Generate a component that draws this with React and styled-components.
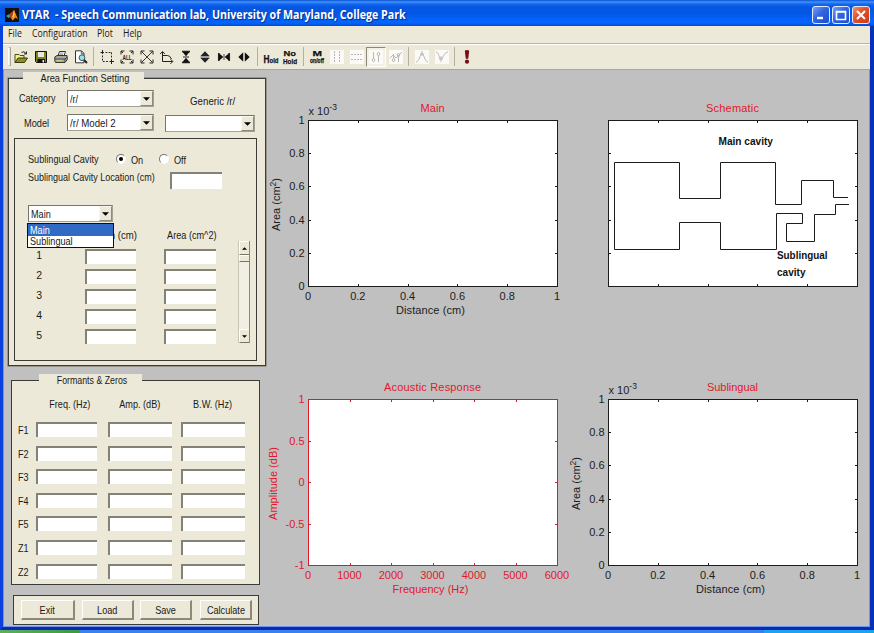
import React from "react";
import styled, { createGlobalStyle, css } from "styled-components";

const Global = createGlobalStyle`
  * { box-sizing: border-box; }
  html, body { margin: 0; padding: 0; overflow: hidden; background: #0a3fd0; }
  body { font-family: "Liberation Sans", Arial, sans-serif; color: #1a1a18; }
`;

const face = "#ece9d8";

const Screen = styled.div`
  width: 874px;
  height: 633px;
  display: flex;
  flex-direction: column;
`;

const TitleBar = styled.header`
  height: 26px;
  display: flex;
  align-items: center;
  padding: 3px 4px 0 5px;
  background: linear-gradient(
    to bottom,
    #0b52d4 0, #3f93fb 2px, #1568ee 4px, #0556e2 7px,
    #0457e6 14px, #0362fb 20px, #0365fd 23px, #0249d0 26px
  );
`;

const TitleText = styled.h1`
  margin: 0 0 0 3px;
  flex: 1;
  white-space: pre;
  color: #fff;
  font: bold 11.5px "Open Sans", sans-serif;
  text-shadow: 1px 1px 1px #0a2a88;
  transform: scaleX(${(p) => p.$sx});
  transform-origin: left center;
`;

const CaptionButtons = styled.div`
  display: flex;
  gap: 2px;
`;

const CaptionButton = styled.button`
  width: 18px;
  height: 18px;
  padding: 0;
  display: grid;
  place-items: center;
  border: 1px solid #e4ecfd;
  border-radius: 3px;
  background: ${(p) =>
    p.$close
      ? "linear-gradient(135deg, #f0906c, #e0502a 45%, #c83c14)"
      : "linear-gradient(135deg, #7aa0f4, #3065e0 45%, #1c4cd0)"};
`;

const Frame = styled.div`
  flex: 1;
  display: flex;
  flex-direction: column;
  border: solid #0a3fe0;
  border-width: 0 4px 3px 3px;
  border-right-color: #0830b8;
  border-bottom-color: #0a2ab0;
`;

const MenuBar = styled.nav`
  height: 18px;
  padding: 0 0 3px 5px;
  display: flex;
  align-items: center;
  background: ${face};
  border-bottom: 1px solid #b8b5a6;
  font: 10.5px "Open Sans", sans-serif;
`;

const MenuItem = styled.span`
  width: ${(p) => p.$w}px;
  flex: none;
  transform: scaleX(${(p) => p.$sx || 0.83});
  transform-origin: left center;
  white-space: nowrap;
`;

const ToolBar = styled.div`
  height: 26px;
  display: flex;
  align-items: center;
  padding: 0 0 1px 5px;
  background: ${face};
  border-top: 1px solid #fff;
  border-bottom: 1px solid #a9a698;
`;

const Grip = styled.i`
  width: 3px;
  height: 19px;
  border: 1px solid #c4c1b0;
  border-left-color: #fff;
  border-right-color: #aaa798;
`;

const Tool = styled.span`
  width: ${(p) => p.$w || 20}px;
  height: 20px;
  display: grid;
  place-items: center;
  flex: none;
  ${(p) =>
    p.$pressed &&
    css`
      border: 1px solid #fff;
      border-top-color: #8c897a;
      border-left-color: #8c897a;
      background: #f3f1e6;
    `}
  svg { display: block; overflow: visible; }
`;

const ToolSep = styled.i`
  width: ${(p) => p.$w}px;
  height: 19px;
  display: flex;
  justify-content: center;
  &::before {
    content: "";
    width: 1px;
    background: #b3b0a1;
  }
`;

const Client = styled.main`
  flex: 1;
  display: flex;
  background: #c0c0c0;
  border: solid #6f95f2;
  border-width: 0 1px 1px 1px;
`;

const Controls = styled.aside`
  width: 262px;
  flex: none;
  padding: 8px 0 0 4px;
`;

const Panel = styled.section`
  width: ${(p) => p.$w}px;
  height: ${(p) => p.$h}px;
  margin: ${(p) => p.$m || "0"};
  padding: ${(p) => p.$p || "0"};
  background: ${face};
  border: 1px solid #3c3b35;
  ${(p) => p.$double && "box-shadow: 0 0 0 0.5px #6d6b60;"}
`;

const PanelTab = styled.div`
  width: ${(p) => p.$w}px;
  height: 12px;
  margin: -7px 0 0 ${(p) => p.$x}px;
  padding-left: ${(p) => p.$pad || 0}px;
  background: ${face};
  display: flex;
  align-items: center;
  justify-content: center;
`;

const Row = styled.div`
  display: flex;
  align-items: flex-start;
  height: ${(p) => p.$h}px;
  padding-left: ${(p) => p.$x || 0}px;
`;

const Label = styled.label`
  width: ${(p) => p.$w}px;
  flex: none;
  margin-left: ${(p) => p.$x || 0}px;
  padding-top: ${(p) => p.$t || 0}px;
  display: flex;
  justify-content: ${(p) => (p.$center ? "center" : "flex-start")};
`;

const Narrow = styled.span`
  flex: none;
  display: block;
  font-size: 11px;
  line-height: 12px;
  white-space: nowrap;
  transform: scaleX(${(p) => p.$sx || 0.83});
  transform-origin: ${(p) => (p.$left ? "left" : "center")} center;
`;

const Combo = styled.div`
  width: ${(p) => p.$w}px;
  height: 17px;
  flex: none;
  margin-left: ${(p) => p.$x || 0}px;
  margin-top: ${(p) => p.$t || 0}px;
  display: flex;
  align-items: center;
  padding-left: 2px;
  background: #fff;
  border: 1px solid #77756a;
  border-right-color: #a5a294;
  border-bottom-color: #a5a294;
`;

const ComboArrow = styled.span`
  width: 13px;
  height: 15px;
  margin-left: auto;
  display: grid;
  place-items: center;
  background: ${face};
  border: 1px solid #f8f7f0;
  border-right-color: #8c897a;
  border-bottom-color: #8c897a;
`;

const Field = styled.div`
  width: ${(p) => p.$w}px;
  height: ${(p) => p.$h || 15}px;
  flex: none;
  margin-left: ${(p) => p.$x || 0}px;
  margin-top: ${(p) => p.$t || 0}px;
  background: #fff;
  border-top: 2px solid #848276;
  border-left: 2px solid #848276;
`;

const Radio = styled.span`
  width: 10px;
  height: 10px;
  flex: none;
  margin-top: 1px;
  display: grid;
  place-items: center;
  border-radius: 50%;
  background: #fff;
  border: 1px solid #fbfaf4;
  border-top-color: #77756a;
  border-left-color: #77756a;
  &::before {
    content: "";
    width: 4px;
    height: 4px;
    border-radius: 50%;
    background: ${(p) => (p.$on ? "#000" : "transparent")};
  }
`;

const ComboHost = styled.div`
  position: relative;
  width: 85px;
`;

const DropList = styled.div`
  position: absolute;
  z-index: 2;
  left: -1px;
  top: 18px;
  width: 87px;
  height: 25px;
  border: 1px solid #111;
  background: #fff;
`;

const Option = styled.div`
  height: 11.5px;
  padding-left: 2px;
  display: flex;
  align-items: center;
  ${(p) => p.$on && "background: #316ac5; color: #fff;"}
`;

const TableArea = styled.div`
  display: flex;
`;

const ScrollBar = styled.div`
  width: 12px;
  height: 102px;
  margin: 19px 0 0 22px;
  display: flex;
  flex-direction: column;
  border-left: 1px solid #c9c6b6;
  border-right: 1px solid #8b887a;
  background: #f1efe4;
`;

const ScrollPart = styled.span`
  height: ${(p) => p.$h}px;
  margin-top: ${(p) => (p.$end ? "auto" : 0)};
  display: grid;
  place-items: center;
  background: ${face};
  border: 1px solid #fff;
  border-right: 0;
  border-bottom-color: #77756a;
`;

const PushButton = styled.button`
  width: ${(p) => p.$w}px;
  height: 20px;
  margin-left: ${(p) => p.$x}px;
  padding: 0;
  display: flex;
  align-items: center;
  justify-content: center;
  flex: none;
  background: ${face};
  color: inherit;
  font-family: inherit;
  border: 1px solid #fff;
  border-right: 2px solid #8c897a;
  border-bottom: 2px solid #8c897a;
`;

const Plots = styled.div`
  display: grid;
  grid-template-columns: 300px 300px;
  grid-template-rows: 279px 277px;
  svg { display: block; overflow: visible; }
`;

const TaskBar = styled.footer`
  height: 3px;
  display: flex;
  background: #3a80ee;
`;
const StartEdge = styled.div`
  width: 80px;
  background: linear-gradient(to right, #5fae5c, #3c9a3c);
`;
const TrayEdge = styled.div`
  width: 110px;
  margin-left: auto;
  background: #1ba3ee;
`;

const T = ({ children, ...rest }) => <Narrow {...rest}>{children}</Narrow>;

const Arrow = ({ up, s = 7 }) => (
  <svg width={s} height={s / 2 + 0.5} viewBox="0 0 8 4">
    <path d={up ? "M0 4L4 0L8 4Z" : "M0 0H8L4 4Z"} fill="#000" />
  </svg>
);

function Select({ text, sx, ...rest }) {
  return (
    <Combo {...rest}>
      <T $left $sx={sx}>{text}</T>
      <ComboArrow><Arrow /></ComboArrow>
    </Combo>
  );
}

const MatlabLogo = () => (
  <svg width="14" height="14" viewBox="0 0 14 14">
    <rect width="14" height="14" fill="#15100f" />
    <path d="M1 8L4 6.2L6 8L4 10Z" fill="#35a9b8" />
    <path d="M4 6.2L7 4L9 1.6L8 8L6 10L4.5 9Z" fill="#b3401c" />
    <path d="M9 1.6L10.3 5L13 11.3L10.5 9.6L7.6 12.5L6 10L8 7Z" fill="#f28a1d" />
    <path d="M9 2.2L9.6 6L8.2 9.5L7.4 9Z" fill="#fbd750" />
  </svg>
);

const Ico = ({ children, w = 14, h = 14 }) => (
  <svg width={w} height={h} viewBox={`0 0 ${w} ${h}`} fill="none" stroke="#222">
    {children}
  </svg>
);

const OpenIcon = () => (
  <Ico>
    <path d="M1 12.5V4.5H5L6 5.5H10V8" fill="#f3ef9a" stroke="#4a4a14" />
    <path d="M1 12.5L4 8H13.5L10.5 12.5Z" fill="#8f8f1c" stroke="#3a3a10" />
    <path d="M7.5 2.5Q10 0.5 12 3.5M12.5 1.5V4H10" stroke="#222" />
  </Ico>
);
const SaveIcon = () => (
  <Ico>
    <path d="M1.5 1.5H12.5V12.5H2.5L1.5 11.5Z" fill="#83831c" stroke="#111" />
    <rect x="4" y="2" width="6" height="5" fill="#e8e8e0" stroke="none" />
    <rect x="3.5" y="9" width="7.5" height="4" fill="#111" stroke="none" />
    <rect x="8.5" y="10" width="1.6" height="2.4" fill="#eee" stroke="none" />
  </Ico>
);
const PrintIcon = () => (
  <Ico>
    <path d="M4 6L5.5 1.5H11.5L10 6" fill="#fff" stroke="#333" />
    <path d="M0.8 7L3 5.5H13L13.3 9.5L11 12.5H1.5L0.8 11Z" fill="#a8a8a2" stroke="#333" />
    <path d="M1 9H11L13 7M11 9V12" stroke="#444" />
    <path d="M3 10.7H8" stroke="#dede40" />
    <path d="M6 3H9.6M5.5 4.5H9" stroke="#777" strokeWidth="0.7" />
  </Ico>
);
const PreviewIcon = () => (
  <Ico>
    <path d="M1.5 0.8H7.5L10 3.5V12.8H1.5Z" fill="#fff" stroke="#333" />
    <path d="M7.3 1V3.8H10" stroke="#333" strokeWidth="0.8" />
    <circle cx="8" cy="7.7" r="2.9" fill="#9fdce4" stroke="#3d5b60" />
    <path d="M10 10L13 13" stroke="#222" strokeWidth="2" />
  </Ico>
);
const CropIcon = () => (
  <Ico>
    <path d="M2.5 0V4M0.5 2.5H4M11.5 9V14M9.5 11.5H14" />
    <path d="M5.5 2.5H12M2.5 5.5V11.5H9M11.5 2.5V8" strokeDasharray="1.8 1.4" />
  </Ico>
);
const ArrowCorners = () => (
  <path d="M1 4.5V1H4.5M9.5 1H13V4.5M13 9.5V13H9.5M4.5 13H1V9.5" />
);
const AllIcon = () => (
  <Ico>
    <ArrowCorners />
    <path d="M1 1L3 3M13 1L11 3M1 13L3 11M13 13L11 11" />
    <text x="2.4" y="10" fontSize="7.5" fontWeight="bold" fill="#222" stroke="none" textLength="9.4" lengthAdjust="spacingAndGlyphs">ALL</text>
  </Ico>
);
const ExpandIcon = () => (
  <Ico>
    <ArrowCorners />
    <path d="M1.5 1.5L12.5 12.5M12.5 1.5L1.5 12.5" strokeWidth="0.9" />
  </Ico>
);
const AxesIcon = () => (
  <Ico>
    <path d="M3.5 2V11.5H13.5M1.2 4L3.5 1.5L5.8 4M11.5 9.2L13.8 11.5L11.5 13.8" />
    <path d="M4 5.5H8.5Q11 5.5 12.5 9" />
  </Ico>
);
const VInIcon = () => (
  <Ico>
    <path d="M3 1.5H11M3 12.5H11" strokeWidth="1.6" />
    <path d="M3.5 2L7 6.2L10.5 2ZM3.5 12L7 7.8L10.5 12Z" fill="#111" stroke="none" />
    <path d="M4 7H10" />
  </Ico>
);
const VOutIcon = () => (
  <Ico>
    <path d="M2.5 6L7 1.2L11.5 6ZM2.5 8L7 12.8L11.5 8Z" fill="#222" stroke="none" />
    <path d="M2.5 7H11.5" stroke="#555" />
  </Ico>
);
const HInIcon = () => (
  <Ico>
    <path d="M1.7 3V11M12.3 3V11" strokeWidth="1.5" />
    <path d="M2 3.3L6.3 7L2 10.7ZM12 3.3L7.7 7L12 10.7Z" fill="#111" stroke="none" />
    <path d="M7 4V10" strokeWidth="0.8" />
  </Ico>
);
const HOutIcon = () => (
  <Ico>
    <path d="M6 2.5L1.3 7L6 11.5ZM8 2.5L12.7 7L8 11.5Z" fill="#111" stroke="none" />
    <path d="M7 2.5V11.5" stroke="#777" strokeWidth="0.8" />
  </Ico>
);

/* Toolbar buttons whose face is a word; each line is [text, x, baseline, size, width]. */
const GlyphText = ({ lines }) => (
  <Ico w={16} h={16}>
    {lines.map(([s, x, y, size, len]) => (
      <text key={y} x={x} y={y} fontSize={size} fontWeight="bold" fill="#111" stroke="#111" strokeWidth="0.25" textLength={len} lengthAdjust="spacingAndGlyphs">{s}</text>
    ))}
  </Ico>
);
const holdWord = <>H<tspan fontSize="8">old</tspan></>;

const Pale = ({ d, dash }) => (
  <Ico>
    <rect x="0" y="0" width="14" height="14" fill="#fbfaf6" stroke="none" />
    <path d={d} stroke="#b9b7b4" strokeDasharray={dash} />
  </Ico>
);
const BangIcon = () => (
  <Ico>
    <path d="M4.8 0.8Q7 -0.6 9.2 0.8L8.2 8.8H5.8Z" fill="#7c0c14" stroke="none" />
    <circle cx="7" cy="11.7" r="2.1" fill="#7c0c14" stroke="none" />
  </Ico>
);

const PLOT = { x: 42.5, y: 50.5, w: 249, h: 166 };

function Chart({ title, titleW, color = "#1c1c1c", xs, ys, xLabel, xLabelW, yLabel, exponent, xDiv, yDiv, children }) {
  const { x, y, w, h } = PLOT;
  const r = (v) => Math.floor(v) + 0.5;
  const ticks = [];
  for (let i = 1; i < xDiv; i++) {
    const px = r(x + (w * i) / xDiv);
    ticks.push(`M${px} ${y}v2.5M${px} ${y + h}v-2.5`);
  }
  for (let i = 1; i < yDiv; i++) {
    const py = r(y + (h * i) / yDiv);
    ticks.push(`M${x} ${py}h2.5M${x + w} ${py}h-2.5`);
  }
  return (
    <svg width="300" height="277" viewBox="0 0 300 277" fontSize="11" fill={color}>
      <rect x={x} y={y} width={w} height={h} fill="#fff" stroke={color} />
      <path d={ticks.join("")} stroke={color} fill="none" />
      <text x={x + w / 2 - 0.5} y={y - 9} textAnchor="middle" fill="#e0182c" textLength={titleW}>{title}</text>
      {exponent && (
        <text x={x} y={y - 5.5}>x 10<tspan fontSize="8.5" dy="-5.5">-3</tspan></text>
      )}
      {xs && xs.map((s, i) => (
        <text key={s} x={x + (w * i) / xDiv - 0.5} y={y + h + 13} textAnchor="middle">{s}</text>
      ))}
      {ys && ys.map((s, i) => (
        <text key={s} x={x - 4} y={y + (h * i) / yDiv + 3.5} textAnchor="end">{s}</text>
      ))}
      {xLabel && <text x={x + w / 2 - 2.5} y={y + h + 27.5} textAnchor="middle" textLength={xLabelW}>{xLabel}</text>}
      {yLabel && (
        <text transform={`translate(${exponent ? 14 : 11} ${y + h / 2 + 1}) rotate(-90)`} textAnchor="middle">{yLabel}</text>
      )}
      {children}
    </svg>
  );
}

const unit = ["0", "0.2", "0.4", "0.6", "0.8", "1"];
const unitDown = [...unit].reverse();
const areaLabel = <>Area (cm<tspan fontSize="8.5" dy="-4">2</tspan><tspan dy="4">)</tspan></>;

const areaRows = ["1", "2", "3", "4", "5"];
const formants = ["F1", "F2", "F3", "F4", "F5", "Z1", "Z2"];

export default function App() {
  return (
    <Screen>
      <Global />
      <TitleBar>
        <MatlabLogo />
        <TitleText $sx={0.928}>{"VTAR  - Speech Communication lab, University of Maryland, College Park"}</TitleText>
        <CaptionButtons>
          <CaptionButton>
            <svg width="12" height="12"><path d="M2 9H8" stroke="#fff" strokeWidth="2.4" /></svg>
          </CaptionButton>
          <CaptionButton>
            <svg width="12" height="12"><path d="M1.5 2.5H10.5V10.5H1.5ZM1.5 3H10.5" stroke="#fff" strokeWidth="1.6" fill="none" /></svg>
          </CaptionButton>
          <CaptionButton $close>
            <svg width="12" height="12"><path d="M2 2L10 10M10 2L2 10" stroke="#fff" strokeWidth="2" /></svg>
          </CaptionButton>
        </CaptionButtons>
      </TitleBar>

      <Frame>
        <MenuBar>
          <MenuItem $w={24}>File</MenuItem>
          <MenuItem $w={65}>Configuration</MenuItem>
          <MenuItem $w={26}>Plot</MenuItem>
          <MenuItem $w={30}>Help</MenuItem>
        </MenuBar>
        <ToolBar>
          <Grip />
          <Tool><OpenIcon /></Tool>
          <Tool><SaveIcon /></Tool>
          <Tool><PrintIcon /></Tool>
          <Tool $w={19}><PreviewIcon /></Tool>
          <ToolSep $w={7} />
          <Tool><CropIcon /></Tool>
          <Tool><AllIcon /></Tool>
          <Tool $w={19}><ExpandIcon /></Tool>
          <Tool><AxesIcon /></Tool>
          <Tool $w={19}><VInIcon /></Tool>
          <Tool $w={19}><VOutIcon /></Tool>
          <Tool><HInIcon /></Tool>
          <Tool><HOutIcon /></Tool>
          <ToolSep $w={7} />
          <Tool $w={19}><GlyphText lines={[[holdWord, 0.5, 14, 11, 15]]} /></Tool>
          <Tool><GlyphText lines={[["No", 1.5, 6.8, 7.5, 12.5], ["Hold", 1, 15, 7.5, 14]]} /></Tool>
          <ToolSep $w={6} />
          <Tool $w={21}><GlyphText lines={[["M", 3.5, 7, 8, 9.5], ["on/off", 1, 14, 6.5, 14]]} /></Tool>
          <Tool><Pale dash="2 1" d="M4.5 1V13M9.5 1V13" /></Tool>
          <Tool $w={19}><Pale dash="2 1" d="M1 4.5H13M1 9.5H13" /></Tool>
          <Tool $pressed><Pale d="M4.5 2V8M4.5 8L6 10L4.5 12L3 10ZM9.5 12V6M8 4L9.5 2L11 4L9.5 6Z" /></Tool>
          <Tool $w={19}><Pale d="M1 8L4 5L7 8L13 2M4.5 4V8M4.5 8L6 10L4.5 12L3 10ZM9.5 12V7M8 5L9.5 3L11 5L9.5 7Z" /></Tool>
          <ToolSep $w={6} />
          <Tool $w={21}><Pale d="M1 12C4 12 5 4 7 4S10 12 13 12M7 1V6M5 4H9" /></Tool>
          <Tool $w={19}><Pale d="M1 2C4 2 4 9 6 9S9 2 13 2M6 6V12M4 9H8" /></Tool>
          <ToolSep $w={6} />
          <Tool><BangIcon /></Tool>
        </ToolBar>

        <Client>
          <Controls>
            <Panel $w={258} $h={288} $double>
              <PanelTab $w={121} $x={14} $pad={2}><T $sx={0.84}>Area Function Setting</T></PanelTab>
              <Row $h={24} $x={10}>
                <Label $w={48} $t={8}><T $left $sx={0.82}>Category</T></Label>
                <Select $w={87} $t={6} text="/r/" />
                <Label $w={46} $x={36} $t={11} $center><T $sx={0.88}>Generic /r/</T></Label>
              </Row>
              <Row $h={30} $x={15}>
                <Label $w={43} $t={9}><T $left $sx={0.84}>Model</T></Label>
                <Select $w={87} $t={6} text="/r/ Model 2" sx={0.88} />
                <Select $w={90} $x={11} $t={7} text="" />
              </Row>
              <Panel $w={243} $h={223} $m="0 0 0 5px" $p="14px 0 0 13px">
                <Row $h={18}>
                  <Label $w={88}><T $left>Sublingual Cavity</T></Label>
                  <Radio $on />
                  <Label $w={28} $x={5} $t={1}><T $left>On</T></Label>
                  <Radio />
                  <Label $w={25} $x={5} $t={1}><T $left>Off</T></Label>
                </Row>
                <Row $h={34}>
                  <Label $w={142}><T $left $sx={0.82}>Sublingual Cavity Location (cm)</T></Label>
                  <Field $w={52} $h={17} $t={1} />
                </Row>
                <ComboHost>
                  <Select $w={85} text="Main" />
                  <DropList>
                    <Option $on><T $left>Main</T></Option>
                    <Option><T $left>Sublingual</T></Option>
                  </DropList>
                </ComboHost>
                <TableArea>
                  <div>
                    <Row $h={27}>
                      <Label $w={63} $x={52} $t={7} $center><T $sx={0.87}>Length (cm)</T></Label>
                      <Label $w={48} $x={25} $t={7} $center><T $sx={0.83}>Area (cm^2)</T></Label>
                    </Row>
                    {areaRows.map((n) => (
                      <Row key={n} $h={20}>
                        <Label $w={22} $center><T $sx={0.95}>{n}</T></Label>
                        <Field $w={51} $x={35} />
                        <Field $w={52} $x={28} />
                      </Row>
                    ))}
                  </div>
                  <ScrollBar>
                    <ScrollPart $h={14}><Arrow up s={5} /></ScrollPart>
                    <ScrollPart $h={7} />
                    <ScrollPart $h={14} $end><Arrow s={5} /></ScrollPart>
                  </ScrollBar>
                </TableArea>
              </Panel>
            </Panel>

            <Panel $w={249} $h={205} $m="14px 0 0 3px">
              <PanelTab $w={103} $x={27} $pad={4}><T $sx={0.8}>Formants &amp; Zeros</T></PanelTab>
              <Row $h={36} $x={24}>
                <Label $w={68} $t={12} $center><T>Freq. (Hz)</T></Label>
                <Label $w={72} $t={12} $center><T>Amp. (dB)</T></Label>
                <Label $w={73} $t={12} $center><T>B.W. (Hz)</T></Label>
              </Row>
              {formants.map((n) => (
                <Row key={n} $h={23.6} $x={6}>
                  <Label $w={18} $t={2}><T $left $sx={0.82}>{n}</T></Label>
                  <Field $w={61} />
                  <Field $w={64} $x={11} />
                  <Field $w={64} $x={9} />
                </Row>
              ))}
            </Panel>

            <Panel $w={246} $h={30} $m="10px 0 0 5px" $p="4px 0 0 0">
              <Row $h={20}>
                <PushButton $w={54} $x={7}><T>Exit</T></PushButton>
                <PushButton $w={52} $x={7}><T>Load</T></PushButton>
                <PushButton $w={52} $x={6}><T>Save</T></PushButton>
                <PushButton $w={52} $x={8}><T>Calculate</T></PushButton>
              </Row>
            </Panel>
          </Controls>

          <Plots>
            <Chart title="Main" titleW={24} xs={unit} ys={unitDown} xDiv={5} yDiv={5} exponent xLabel="Distance (cm)" xLabelW={69} yLabel={areaLabel} />
            <Chart title="Schematic" titleW={53} xDiv={5} yDiv={5}>
              <path
                transform="translate(-566 -70)"
                fill="none"
                stroke="#1c1c1c"
                d="M848 197.5H833.5V180.5H801.5V204.5H775.5V162.5H720.5V198.5H679.5V162.5H614.5V249.5H679.5V222.5H720.5V249.5H776.5V213.5H802.5V223.5H786.5V241.5H814.5V214.5H835.5V204.5H849"
              />
              <g fontWeight="bold" fill="#111">
                <text x="152.5" y="75" textLength="54.5" lengthAdjust="spacingAndGlyphs">Main cavity</text>
                <text x="211" y="188.5" textLength="50.5" lengthAdjust="spacingAndGlyphs">Sublingual</text>
                <text x="211" y="205.5" textLength="28.5" lengthAdjust="spacingAndGlyphs">cavity</text>
              </g>
            </Chart>
            <Chart title="Acoustic Response" titleW={97} color="#e0182c" xs={["0", "1000", "2000", "3000", "4000", "5000", "6000"]} ys={["1", "0.5", "0", "-0.5", "-1"]} xDiv={6} yDiv={4} xLabel="Frequency (Hz)" xLabelW={76} yLabel="Amplitude (dB)" />
            <Chart title="Sublingual" titleW={51} xs={unit} ys={unitDown} xDiv={5} yDiv={5} exponent xLabel="Distance (cm)" xLabelW={69} yLabel={areaLabel} />
          </Plots>
        </Client>
      </Frame>
      <TaskBar><StartEdge /><TrayEdge /></TaskBar>
    </Screen>
  );
}
